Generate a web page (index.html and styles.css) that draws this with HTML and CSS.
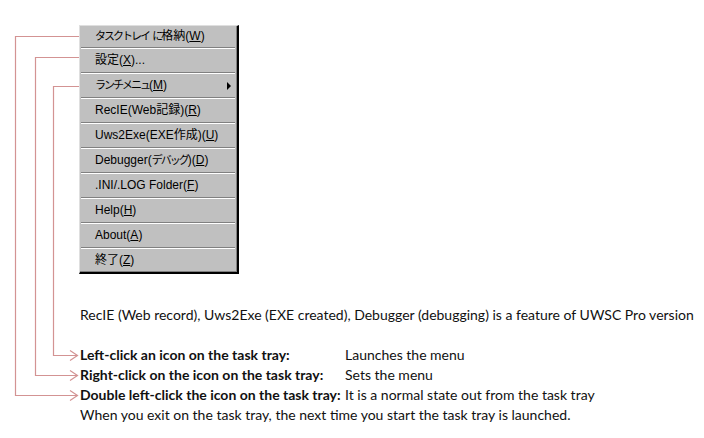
FILE: index.html
```html
<!DOCTYPE html>
<html>
<head>
<meta charset="utf-8">
<link rel="stylesheet" href="styles.css">
</head>
<body>
<div class="page">
  <div class="menu">
    <div class="item first"><span class="kana">タスクトレイ</span> <span class="kana">に</span>格納(<u>W</u>)</div>
    <div class="sep"></div>
    <div class="item">設定(<u>X</u>)...</div>
    <div class="sep"></div>
    <div class="item sub"><span class="kana">ランチメニュ</span>(<u>M</u>)<span class="arrow"></span></div>
    <div class="sep"></div>
    <div class="item">RecIE(Web記録)(<u>R</u>)</div>
    <div class="sep"></div>
    <div class="item">Uws2Exe(EXE作成)(<u>U</u>)</div>
    <div class="sep"></div>
    <div class="item">Debugger(<span class="kana">デバッグ</span>)(<u>D</u>)</div>
    <div class="sep"></div>
    <div class="item">.INI/.LOG Folder(<u>F</u>)</div>
    <div class="sep"></div>
    <div class="item">Help(<u>H</u>)</div>
    <div class="sep"></div>
    <div class="item">About(<u>A</u>)</div>
    <div class="sep"></div>
    <div class="item">終了(<u>Z</u>)</div>
  </div>

  <div class="notes">
    <p class="line">RecIE (Web record), Uws2Exe (EXE created), Debugger (debugging) is a feature of UWSC Pro version</p>
    <p class="line blank"></p>
    <div class="rows">
      <b>Left-click an icon on the task tray:</b><span>Launches the menu</span>
      <b>Right-click on the icon on the task tray:</b><span>Sets the menu</span>
      <b>Double left-click the icon on the task tray:</b><span>It is a normal state out from the task tray</span>
    </div>
    <p class="line">When you exit on the task tray, the next time you start the task tray is launched.</p>
  </div>

  <svg class="links" width="704" height="438" viewBox="0 0 704 438">
    <g fill="none" stroke="#d39393" stroke-width="1.2">
      <polyline points="79,36.5 15.5,36.5 15.5,395.5 77,395.5"/>
      <polyline points="79,57.5 35.5,57.5 35.5,375.5 77,375.5"/>
      <polyline points="79,86.5 53.5,86.5 53.5,355.5 77,355.5"/>
      <polyline points="70,350.5 77.5,355.5 70,360.5"/>
      <polyline points="70,370.5 77.5,375.5 70,380.5"/>
      <polyline points="70,390.5 77.5,395.5 70,400.5"/>
    </g>
  </svg>
</div>
</body>
</html>
```

FILE: styles.css
```css
html, body {
  margin: 0;
  padding: 0;
  background: #ffffff;
}

.page {
  position: relative;
  width: 704px;
  height: 438px;
  overflow: hidden;
}

.menu {
  margin: 25px 0 0 79px;
  width: 157px;
  background: #c0c0c0;
  border-top: 1px solid #dfdfdf;
  border-left: 1px solid #dfdfdf;
  border-right: 2px solid #000000;
  border-bottom: 2px solid #000000;
  box-shadow: inset -1px -1px 0 #808080;
  font-family: "Liberation Sans", "Noto Sans CJK JP", sans-serif;
  font-size: 12px;
  color: #000000;
}

.item {
  height: 23px;
  line-height: 23px;
  padding-left: 15px;
  position: relative;
  white-space: nowrap;
}

.item.first {
  height: 21px;
  line-height: 21px;
}

.kana {
  font-size: 11px;
  letter-spacing: -2px;
}

.item u {
  text-decoration: underline;
  text-underline-offset: 1px;
}

.arrow {
  position: absolute;
  right: 6px;
  top: 8px;
  width: 0;
  height: 0;
  border-top: 4px solid transparent;
  border-bottom: 4px solid transparent;
  border-left: 4px solid #000000;
}

.sep {
  margin: 0 2px 0 1px;
  border-top: 1px solid #808080;
  border-bottom: 1px solid #ffffff;
}

.notes {
  margin: 31px 0 0 80px;
  font-family: Lato, "Open Sans", sans-serif;
  font-size: 14px;
  line-height: 20px;
  color: #111111;
}

.line {
  margin: 0;
  height: 20px;
  white-space: nowrap;
}

.rows {
  display: grid;
  grid-template-columns: 265px auto;
}

.rows b {
  font-weight: bold;
  white-space: nowrap;
}

.rows span {
  white-space: nowrap;
}

.links {
  position: absolute;
  left: 0;
  top: 0;
  pointer-events: none;
}
```
